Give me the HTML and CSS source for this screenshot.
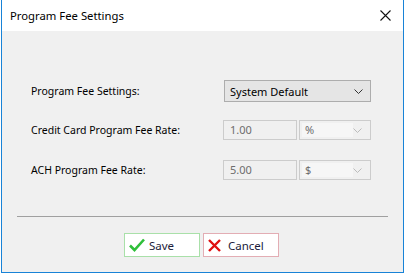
FILE: index.html
```html
<!DOCTYPE html>
<html lang="en">
<head>
  <meta charset="UTF-8" />
  <title>Program Fee Settings</title>
  <link rel="stylesheet" href="styles.css">
</head>
<body>
  <div class="janela">
    <div class="titulo">
      <span>Program Fee Settings</span>
      <svg class="fechar" width="11" height="11" viewBox="0 0 11 11">
        <path d="M0.5 0.5 L10.5 10.5 M10.5 0.5 L0.5 10.5" stroke="#111" stroke-width="1.1" fill="none"/>
      </svg>
    </div>

    <div class="corpo">
      <div class="linha l1">
        <label>Program Fee Settings:</label>
        <div class="combo ativo">
          <span>System Default</span>
          <svg width="9" height="5" viewBox="0 0 9 5"><path d="M0.5 0.5 L4.5 4.5 L8.5 0.5" stroke="#333" fill="none"/></svg>
        </div>
      </div>

      <div class="linha l2">
        <label>Credit Card Program Fee Rate:</label>
        <div class="campo">1.00</div>
        <div class="combo inativo">
          <span class="texto">%</span>
          <svg width="9" height="5" viewBox="0 0 9 5"><path d="M0.5 0.5 L4.5 4.5 L8.5 0.5" stroke="#bbb" fill="none"/></svg>
        </div>
      </div>

      <div class="linha l3">
        <label>ACH Program Fee Rate:</label>
        <div class="campo">5.00</div>
        <div class="combo inativo">
          <span class="texto">$</span>
          <svg width="9" height="5" viewBox="0 0 9 5"><path d="M0.5 0.5 L4.5 4.5 L8.5 0.5" stroke="#bbb" fill="none"/></svg>
        </div>
      </div>

      <div class="separador"></div>

      <div class="botoes">
        <button class="btn salvar">
          <svg width="16" height="14" viewBox="0 0 16 14"><path d="M1 7.5 L5.5 12 L15 1.5" stroke="#2fbf3a" stroke-width="2.6" fill="none"/></svg>
          Save
        </button>
        <button class="btn cancelar">
          <svg width="13" height="13" viewBox="0 0 13 13"><path d="M1 1 L12 12 M12 1 L1 12" stroke="#e01010" stroke-width="2.4" fill="none"/></svg>
          Cancel
        </button>
      </div>
    </div>
  </div>

  <div class="fundo">
    <div class="aba a1"></div>
    <div class="aba a2"></div>
  </div>
</body>
</html>
```

FILE: styles.css
```css
body {
  margin: 0;
  background: #fff;
  font-family: "Noto Sans", "Open Sans", sans-serif;
  font-size: 10.5px;
  color: #000;
}
.janela {
  width: 401px;
  margin-left: 1px;
  border: 1px solid #1883d7;
  border-top: none;
}
.titulo {
  height: 31px;
  background: #fff;
  display: flex;
  align-items: center;
  justify-content: space-between;
  padding: 0 12px 0 8px;
  font-size: 11.3px;
}
.titulo span {
  margin-top: -1px;
}
.corpo {
  background: #f0f0f0;
  height: 241px;
  padding-top: 49px;
  box-sizing: border-box;
}
.linha {
  display: flex;
  align-items: center;
  padding-left: 29px;
}
.linha label {
  width: 192px;
}
.l1 { height: 22px; }
.l2 { height: 20px; margin-top: 18px; }
.l3 { height: 20px; margin-top: 20px; }
.combo {
  display: flex;
  align-items: center;
  justify-content: space-between;
  box-sizing: border-box;
}
.combo.ativo {
  width: 147px;
  height: 22px;
  background: #e5e5e5;
  border: 1px solid #adadad;
  padding: 0 7px 0 5px;
  margin-left: 1px;
  font-size: 11px;
}
.campo {
  width: 74px;
  height: 20px;
  box-sizing: border-box;
  border: 1px solid #cccccc;
  padding: 0 0 0 6px;
  line-height: 18px;
  color: #6d6d6d;
  font-size: 11px;
}
.combo.inativo {
  width: 72px;
  height: 20px;
  margin-left: 2px;
  border: 1px solid #cccccc;
  padding: 2px 8px 2px 2px;
}
.combo.inativo .texto {
  background: #f6f6f6;
  width: 48px;
  height: 14px;
  line-height: 14px;
  padding-left: 3px;
  color: #6d6d6d;
  font-size: 11px;
}
.separador {
  margin: 36px 0 0 15px;
  width: 371px;
  height: 1px;
  background: #a0a0a0;
}
.botoes {
  display: flex;
  justify-content: center;
  gap: 3px;
  margin-top: 16px;
  padding-right: 2px;
}
.btn {
  width: 76px;
  height: 24px;
  background: #fff;
  font-family: inherit;
  font-size: 11.5px;
  color: #1c1c3a;
  display: flex;
  align-items: center;
  gap: 4px;
  padding: 0 0 0 4px;
}
.salvar {
  border: 1px solid #a9e0a9;
}
.cancelar {
  border: 1px solid #e3adb4;
  gap: 7px;
}
.fundo {
  position: relative;
}
.aba {
  position: absolute;
  top: 0;
  height: 6px;
  border-top: 1px solid #7a7a7a;
}
.a1 {
  left: 0;
  width: 77px;
  border-right: 1px solid #7a7a7a;
}
.a2 {
  left: 213px;
  width: 75px;
  border-left: 1px solid #7a7a7a;
  border-right: 1px solid #7a7a7a;
}
```
